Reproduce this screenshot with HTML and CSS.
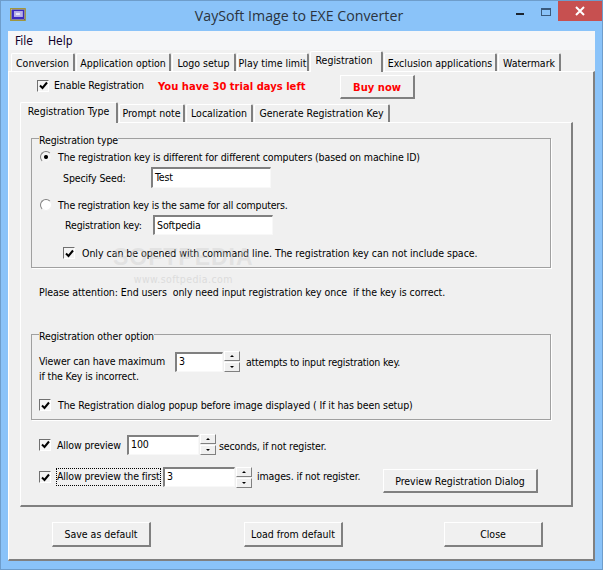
FILE: index.html
```html
<!DOCTYPE html>
<html>
<head>
    <meta charset="utf-8">
    <link rel="stylesheet" href="styles.css">
</head>
<body>
    <div class="window">
        <div class="titlebar">
            <svg class="app-icon" width="16" height="13" viewBox="0 0 16 13">
                <rect x="0.5" y="0.5" width="15" height="12" fill="#1c1c78" stroke="#a89a30"/>
                <rect x="1.5" y="1.5" width="13" height="10" fill="#3a2ac0" stroke="#e8e0a0" stroke-width="0.5"/>
                <rect x="4" y="3" width="9" height="6" fill="#b8b0e8"/>
                <rect x="6" y="5" width="4" height="2" fill="#e8e8f8"/>
            </svg>
            <div class="title">VaySoft Image to EXE Converter</div>
            <div class="win-min"></div>
            <div class="win-max"></div>
            <div class="win-close">
                <svg width="10" height="10" viewBox="0 0 10 10"><path d="M1 1 L9 9 M9 1 L1 9" stroke="#fff" stroke-width="2"/></svg>
            </div>
        </div>

        <div class="client">
            <div class="menubar">
                <span class="menu-item">File</span>
                <span class="menu-item">Help</span>
            </div>

            <div class="tabs outer-tabs">
                <div class="tab tab-w64">Conversion</div>
                <div class="tab tab-w95">Application option</div>
                <div class="tab tab-w64">Logo setup</div>
                <div class="tab tab-w72">Play time limit</div>
                <div class="tab active tab-w73">Registration</div>
                <div class="tab tab-w113">Exclusion applications</div>
                <div class="tab tab-w63">Watermark</div>
            </div>

            <div class="outer-panel">
                <div class="enable-row">
                    <span class="check"><svg width="9" height="9" viewBox="0 0 9 9"><path d="M1 4.5 L3.5 7 L8 1.5" fill="none" stroke="#000" stroke-width="2"/></svg></span>
                    <span class="enable-label">Enable Registration</span>
                    <span class="trial">You have 30 trial days left</span>
                    <div class="btn buy-btn">Buy now</div>
                </div>

                <div class="tabs inner-tabs">
                    <div class="tab active tab-w98">Registration Type</div>
                    <div class="tab tab-w66">Prompt note</div>
                    <div class="tab tab-w67">Localization</div>
                    <div class="tab tab-w136">Generate Registration Key</div>
                </div>

                <div class="inner-panel">
                    <div class="group group-type">
                        <div class="legend">Registration type</div>
                        <div class="row row-radio1">
                            <span class="radio on"></span>
                            <span class="label-after-radio">The registration key is different for different computers (based on machine ID)</span>
                        </div>
                        <div class="row row-seed">
                            <span class="seed-label">Specify Seed:</span>
                            <div class="input input-key">Test</div>
                        </div>
                        <div class="row row-radio2">
                            <span class="radio"></span>
                            <span class="label-after-radio same-label">The registration key is the same for all computers.</span>
                        </div>
                        <div class="row row-key">
                            <span class="key-label">Registration key:</span>
                            <div class="input input-key input-key2">Softpedia</div>
                        </div>
                        <div class="row row-cmd">
                            <span class="check"><svg width="9" height="9" viewBox="0 0 9 9"><path d="M1 4.5 L3.5 7 L8 1.5" fill="none" stroke="#000" stroke-width="2"/></svg></span>
                            <span class="cmd-label">Only can be opened with command line. The registration key can not include space.</span>
                        </div>
                    </div>

                    <div class="attention">Please attention: End users&nbsp; only need input registration key once&nbsp; if the key is correct.</div>

                    <div class="group group-other">
                        <div class="legend">Registration other option</div>
                        <div class="row row-viewer">
                            <span class="viewer-label">Viewer can have maximum</span>
                            <div class="input input-small">3</div>
                            <div class="spin"><div class="spin-btn up"></div><div class="spin-btn down"></div></div>
                            <span class="attempts">attempts to input registration key.</span>
                        </div>
                        <div class="incorrect">if the Key is incorrect.</div>
                        <div class="row row-popup">
                            <span class="check"><svg width="9" height="9" viewBox="0 0 9 9"><path d="M1 4.5 L3.5 7 L8 1.5" fill="none" stroke="#000" stroke-width="2"/></svg></span>
                            <span class="popup-label">The Registration dialog popup before image displayed ( If it has been setup)</span>
                        </div>
                    </div>

                    <div class="row row-preview">
                        <span class="check"><svg width="9" height="9" viewBox="0 0 9 9"><path d="M1 4.5 L3.5 7 L8 1.5" fill="none" stroke="#000" stroke-width="2"/></svg></span>
                        <span class="preview-label">Allow preview</span>
                        <div class="input input-wide">100</div>
                        <div class="spin"><div class="spin-btn up"></div><div class="spin-btn down"></div></div>
                        <span class="seconds">seconds, if not register.</span>
                    </div>
                    <div class="row row-first">
                        <span class="check"><svg width="9" height="9" viewBox="0 0 9 9"><path d="M1 4.5 L3.5 7 L8 1.5" fill="none" stroke="#000" stroke-width="2"/></svg></span>
                        <span class="first-label">Allow preview the first</span>
                        <div class="input input-wide">3</div>
                        <div class="spin"><div class="spin-btn up"></div><div class="spin-btn down"></div></div>
                        <span class="images">images. if not register.</span>
                        <div class="btn preview-btn">Preview Registration Dialog</div>
                    </div>

                    <div class="watermark">
                        <div class="wm-big">SOFTPEDIA</div>
                        <div class="wm-small">www.softpedia.com</div>
                    </div>
                </div>

                <div class="bottom-buttons">
                    <div class="btn bottom-btn">Save as default</div>
                    <div class="btn bottom-btn load-btn">Load from default</div>
                    <div class="btn bottom-btn close-btn">Close</div>
                </div>
            </div>
        </div>
    </div>
</body>
</html>
```

FILE: styles.css
```css
body {
    margin: 0;
    font-family: "DejaVu Sans Condensed", "DejaVu Sans", sans-serif;
    font-size: 10.5px;
    letter-spacing: -0.12px;
    color: #000;
}

.window {
    box-sizing: border-box;
    width: 603px;
    height: 570px;
    background: #8ac3f9;
    border: 1px solid #6e9dcb;
    display: flex;
    flex-direction: column;
}

/* Title bar */
.titlebar {
    height: 30px;
    flex: none;
    display: flex;
    position: relative;
}

.app-icon {
    margin: 7px 0 0 9px;
}

.title {
    position: absolute;
    left: 0;
    right: 5px;
    top: 5px;
    text-align: center;
    font-family: "Open Sans", sans-serif;
    font-size: 14.2px;
    letter-spacing: 0;
    color: #2b3440;
    line-height: 20px;
}

.win-min {
    width: 8px;
    height: 2px;
    background: #1c2530;
    margin: 12px 0 0 490px;
}

.win-max {
    box-sizing: border-box;
    width: 10px;
    height: 8px;
    border: 1px solid #3a5a7c;
    border-top-width: 2px;
    margin: 7px 0 0 17px;
}

.win-close {
    width: 45px;
    height: 20px;
    background: #c75050;
    margin-left: 7px;
    display: flex;
    align-items: center;
    justify-content: center;
}

/* Client area */
.client {
    flex: 1;
    margin: 0 7px 8px;
    background: #f0f0f0;
    display: flex;
    flex-direction: column;
}

.menubar {
    height: 19px;
    flex: none;
    background: #f5f6f8;
    display: flex;
    align-items: center;
    padding-left: 7px;
    gap: 15px;
    font-size: 12px;
    letter-spacing: 0;
    line-height: 14px;
    color: #10002a;
}

/* Tabs */
.tabs {
    display: flex;
    align-items: flex-end;
    gap: 1px;
}

.outer-tabs {
    height: 21px;
    padding-left: 3px;
    flex: none;
    background: #f0f0f0;
}

.inner-tabs {
    height: 20px;
    margin: 3px 0 0 11px;
}

.tab {
    box-sizing: border-box;
    height: 18px;
    line-height: 18px;
    letter-spacing: 0;
    text-align: center;
    white-space: nowrap;
    border: 1px solid #fff;
    border-right: 2px solid #808080;
    border-bottom: none;
    border-radius: 2px 2px 0 0;
    background: #f0f0f0;
}

.inner-tabs .tab {
    line-height: 16px;
}

.tab.active,
.inner-tabs .tab.active {
    height: 21px;
    line-height: 16px;
    margin-bottom: -1px;
    position: relative;
    z-index: 1;
}

.outer-tabs .tab.active {
    padding-right: 4px;
}

.tab-w63 { width: 63px; }
.tab-w64 { width: 64px; }
.tab-w66 { width: 66px; }
.tab-w67 { width: 67px; }
.tab-w72 { width: 72px; }
.tab-w73 { width: 73px; }
.tab-w95 { width: 95px; }
.tab-w98 { width: 98px; }
.tab-w113 { width: 113px; }
.tab-w136 { width: 136px; }

.outer-panel {
    flex: 1;
    border-top: 1px solid #fff;
    border-left: 1px solid #fff;
    border-right: 2px solid #808080;
    border-bottom: 2px solid #808080;
}

.enable-row {
    display: flex;
    align-items: center;
    height: 24px;
    margin-top: 3px;
    padding-left: 28px;
}

.enable-row .check {
    margin-bottom: 3px;
}

.enable-label {
    margin: 0 0 4px 5px;
    width: 104px;
    white-space: nowrap;
}

.trial {
    width: 182px;
    margin-bottom: 2px;
    font-family: "DejaVu Sans", sans-serif;
    font-weight: bold;
    font-size: 10px;
    letter-spacing: 0;
    color: #f00;
    white-space: nowrap;
}

/* Buttons */
.btn {
    box-sizing: border-box;
    display: flex;
    align-items: center;
    justify-content: center;
    background: #f0f0f0;
    border: 1px solid #fff;
    border-right: 2px solid #808080;
    border-bottom: 2px solid #808080;
    letter-spacing: 0;
    white-space: nowrap;
}

.buy-btn {
    width: 75px;
    height: 24px;
    padding-top: 2px;
    font-family: "DejaVu Sans", sans-serif;
    font-weight: bold;
    font-size: 10px;
    color: #f00;
}

.inner-panel {
    box-sizing: border-box;
    width: 553px;
    height: 385px;
    margin-left: 11px;
    padding-top: 15px;
    position: relative;
    border: 1px solid #fff;
    border-right: 2px solid #808080;
    border-bottom: 2px solid #808080;
}

/* Group boxes */
.group {
    box-sizing: border-box;
    width: 520px;
    margin-left: 10px;
    border: 1px solid #a0a0a0;
    box-shadow: 1px 1px 0 #fff;
}

.group-type { height: 130px; }

.group-other {
    height: 86px;
    margin-top: 35px;
}

.legend {
    width: max-content;
    height: 14px;
    line-height: 14px;
    margin: -6px 0 0 7px;
    background: #f0f0f0;
}

.row {
    display: flex;
    align-items: center;
    white-space: nowrap;
}

/* First group */
.row-radio1 { height: 14px; margin: 3px 0 0 8px; }
.row-seed { height: 21px; margin: 3px 0 0 31px; }
.row-radio2 { height: 14px; margin: 10px 0 0 8px; }
.row-key { height: 20px; margin: 3px 0 0 33px; }
.row-cmd { height: 14px; margin: 11px 0 0 31px; }

.label-after-radio { margin-left: 6px; }
.same-label { letter-spacing: -0.18px; }
.seed-label { width: 88px; }
.key-label { width: 88px; }
.cmd-label {
    margin-left: 7px;
    letter-spacing: -0.03px;
}

.attention {
    margin: 17px 0 0 18px;
    height: 14px;
    line-height: 14px;
    letter-spacing: -0.06px;
    white-space: nowrap;
}

/* Second group */
.row-viewer { height: 21px; margin: 8px 0 0 7px; }
.viewer-label {
    width: 136px;
    margin-bottom: 2px;
}
.attempts {
    margin-left: 6px;
    letter-spacing: -0.2px;
}

.incorrect {
    margin: -3px 0 0 7px;
    height: 14px;
    line-height: 14px;
}

.row-popup { height: 14px; margin: 15px 0 0 7px; }
.popup-label {
    margin-left: 7px;
    letter-spacing: -0.08px;
}

/* Preview rows */
.row-preview { height: 21px; margin: 14px 0 0 18px; }
.row-first {
    height: 26px;
    margin: 12px 0 0 18px;
    align-items: flex-start;
}

.row-first .check { margin-top: 4px; }
.row-first .first-label { margin-top: 2px; }
.row-first .images { margin-top: 3px; }

.preview-label {
    margin-left: 6px;
    width: 70px;
}

.seconds {
    margin: 2px 0 0 3px;
}

.first-label {
    margin-left: 6px;
    width: 103px;
    height: 16px;
    line-height: 15px;
    outline: 1px dotted #000;
}

.first-label + .input { margin-left: 3px; }

.images { margin-left: 5px; width: 126px; }

.preview-btn {
    width: 155px;
    height: 24px;
    margin-top: 2px;
}

/* Inputs */
.input {
    box-sizing: border-box;
    padding-left: 2px;
    background: #fff;
    line-height: 16px;
    border-top: 2px solid #808080;
    border-left: 2px solid #808080;
    border-right: 1px solid #f8f8f8;
    border-bottom: 1px solid #f8f8f8;
}

.input-key { width: 120px; height: 21px; }
.input-key2 { height: 20px; }
.input-small { width: 48px; height: 20px; line-height: 15px; }
.input-wide { width: 72px; height: 20px; line-height: 15px; }

.spin {
    width: 16px;
    height: 21px;
    margin-left: 1px;
    display: flex;
    flex-direction: column;
    gap: 1px;
}

.spin-btn {
    box-sizing: border-box;
    flex: 1;
    display: flex;
    align-items: center;
    justify-content: center;
    border: 1px solid #fff;
    border-right: 1px solid #808080;
    border-bottom: 1px solid #808080;
}

.spin-btn::after {
    content: "";
    border-left: 2px solid transparent;
    border-right: 2px solid transparent;
}

.spin-btn.up::after { border-bottom: 2px solid #000; }
.spin-btn.down::after { border-top: 2px solid #000; }

/* Check and radio */
.check {
    box-sizing: border-box;
    width: 12px;
    height: 12px;
    flex: none;
    display: flex;
    align-items: center;
    justify-content: center;
    background: #f4f4f4;
    border-top: 1px solid #707070;
    border-left: 1px solid #707070;
    border-right: 1px solid #fff;
    border-bottom: 1px solid #fff;
}

.radio {
    box-sizing: border-box;
    width: 12px;
    height: 12px;
    flex: none;
    border-radius: 50%;
    background: #fff;
    border: 1px solid #808080;
    border-right-color: #f0f0f0;
    border-bottom-color: #f0f0f0;
}

.radio.on {
    background: radial-gradient(circle, #000 0, #000 1.5px, #f4f4f4 2.5px);
}

/* Softpedia mark over the form */
.watermark {
    position: absolute;
    left: 92px;
    top: 123px;
    text-align: center;
}

.wm-big {
    font-family: "Liberation Sans", sans-serif;
    font-size: 23px;
    font-weight: bold;
    color: rgba(205, 205, 205, 0.4);
    line-height: 22px;
    letter-spacing: 1px;
}

.wm-small {
    margin-top: 5px;
    font-size: 10.5px;
    letter-spacing: 0.4px;
    color: #dcdcdc;
    line-height: 12px;
}

/* Bottom row */
.bottom-buttons {
    display: flex;
    margin: 15px 0 0 43px;
}

.bottom-btn {
    width: 99px;
    height: 25px;
}

.load-btn { margin-left: 93px; }
.close-btn { margin-left: 101px; }
```
